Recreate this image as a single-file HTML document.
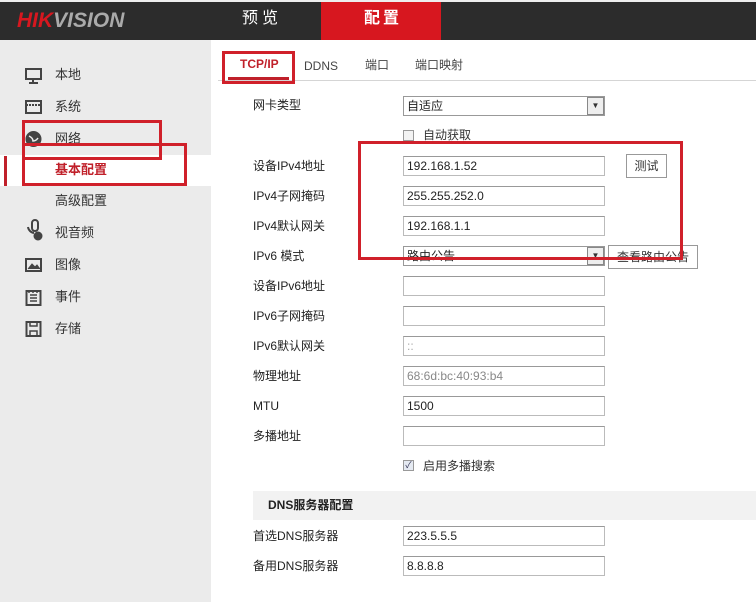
<!DOCTYPE html>
<html><head><meta charset="utf-8"><style>
*{margin:0;padding:0;box-sizing:border-box}
body{width:756px;height:602px;overflow:hidden;background:#fff;font-family:"Liberation Sans","Noto Sans CJK SC",sans-serif;font-size:12px;color:#333;position:relative;line-height:1.3}
.a{position:absolute}
.hdr{left:0;top:0;width:756px;height:40px;background:#2c2c2c;border-top:2px solid #eee}
.logo{left:17px;top:7px;font-size:21px;font-weight:bold;font-style:italic;letter-spacing:0}
.side{left:0;top:40px;width:211px;height:562px;background:#ebebeb}
.mi{left:55px;font-size:13px;color:#333}
.lab{left:253px;font-size:12px;color:#222}
.inp{left:403px;width:202px;height:20px;border:1px solid #bbb;border-top-color:#999;background:#fff;padding:0 3px;line-height:18px;font-size:12px;color:#222}
.rb{border:3px solid #d0202a}
</style></head><body>
<div class="a hdr"></div>
<div class="a logo"><span style="color:#d7171f">HIK</span><span style="color:#aaa">VISION</span></div>
<div class="a" style="left:242px;top:9px;color:#fff;font-size:16px;letter-spacing:4px">预览</div>
<div class="a" style="left:321px;top:2px;width:120px;height:38px;background:#d7171f"></div>
<div class="a" style="left:364px;top:9px;color:#fff;font-size:16px;font-weight:bold;letter-spacing:3px">配置</div>
<div class="a side"></div>
<div class="a" style="left:0;top:155px;width:211px;height:31px;background:#fff"></div>
<div class="a" style="left:4px;top:156px;width:3px;height:30px;background:#c0202a"></div>
<svg class="a" style="left:24px;top:66px" width="20" height="290" viewBox="0 0 20 290" fill="none" stroke="#444" stroke-width="2">
<rect x="2" y="3" width="15" height="10"/><path d="M9 13v3M5 17h9"/>
<rect x="2" y="35" width="15" height="12"/><path d="M2 39h15" stroke-dasharray="2 1"/>
<circle cx="9.5" cy="73" r="7" fill="#444"/><path d="M5 70q4 2 4 5q3 0 5 -3" stroke="#ebebeb" stroke-width="1.5"/>
<path d="M8 162v-5a3 3 0 0 1 6 0v5a3 3 0 0 1 -6 0zM4 161a7 7 0 0 0 6 6"/><circle cx="14" cy="170" r="3.5" fill="#444"/>
<rect x="2" y="193" width="15" height="12"/><path d="M4 203l4-5 3 3 2-2 3 4" fill="#444" stroke-width="1"/>
<rect x="2.5" y="225" width="14" height="14"/><path d="M6 229h7M6 232h7M6 235h7M5 224v3M9 224v3M13 224v3" stroke-width="1.5"/>
<rect x="2.5" y="256" width="14" height="14"/><path d="M6 256v4h7v-4M6 270v-5h7v5" stroke-width="1.5"/>
</svg>
<div class="a mi" style="top:67px">本地</div>
<div class="a mi" style="top:99px">系统</div>
<div class="a mi" style="top:131px">网络</div>
<div class="a mi" style="top:162px;color:#c0202a;font-weight:bold">基本配置</div>
<div class="a mi" style="top:193px">高级配置</div>
<div class="a mi" style="top:225px">视音频</div>
<div class="a mi" style="top:257px">图像</div>
<div class="a mi" style="top:289px">事件</div>
<div class="a mi" style="top:321px">存储</div>
<div class="a" style="left:218px;top:80px;width:538px;height:1px;background:#d5d5d5"></div>
<div class="a" style="left:228px;top:77px;width:61px;height:3px;background:#c0202a"></div>
<div class="a" style="left:240px;top:57px;color:#c0202a;font-weight:bold;font-size:12px">TCP/IP</div>
<div class="a" style="left:304px;top:59px;font-size:12px;color:#444">DDNS</div>
<div class="a" style="left:365px;top:58px;color:#444">端口</div>
<div class="a" style="left:415px;top:58px;color:#444">端口映射</div>
<div class="a lab" style="top:98px">网卡类型</div>
<div class="a inp" style="top:96px;border-color:#999">自适应</div>
<div class="a" style="left:587px;top:97px;width:17px;height:18px;border:1px solid #888;background:#eee;font-size:8px;text-align:center;line-height:16px">▼</div>
<div class="a" style="left:403px;top:130px;width:11px;height:11px;border:1px solid #999;background:#f3f3f3"></div>
<div class="a" style="left:423px;top:128px">自动获取</div>
<div class="a lab" style="top:159px">设备IPv4地址</div><div class="a inp" style="top:156px">192.168.1.52</div>
<div class="a" style="left:626px;top:154px;width:41px;height:24px;border:1px solid #999;background:#fff;text-align:center;line-height:22px">测试</div>
<div class="a lab" style="top:189px">IPv4子网掩码</div><div class="a inp" style="top:186px">255.255.252.0</div>
<div class="a lab" style="top:219px">IPv4默认网关</div><div class="a inp" style="top:216px">192.168.1.1</div>
<div class="a lab" style="top:249px">IPv6 模式</div><div class="a inp" style="top:246px;border-color:#999">路由公告</div>
<div class="a" style="left:587px;top:247px;width:17px;height:18px;border:1px solid #888;background:#eee;font-size:8px;text-align:center;line-height:16px">▼</div>
<div class="a" style="left:608px;top:245px;width:90px;height:24px;border:1px solid #999;background:#fff;text-align:center;line-height:22px">查看路由公告</div>
<div class="a lab" style="top:279px">设备IPv6地址</div><div class="a inp" style="top:276px"></div>
<div class="a lab" style="top:309px">IPv6子网掩码</div><div class="a inp" style="top:306px"></div>
<div class="a lab" style="top:339px">IPv6默认网关</div><div class="a inp" style="top:336px;color:#aaa">::</div>
<div class="a lab" style="top:369px">物理地址</div><div class="a inp" style="top:366px;color:#888">68:6d:bc:40:93:b4</div>
<div class="a lab" style="top:399px">MTU</div><div class="a inp" style="top:396px">1500</div>
<div class="a lab" style="top:429px">多播地址</div><div class="a inp" style="top:426px"></div>
<div class="a" style="left:403px;top:460px;width:11px;height:11px;border:1px solid #999;background:#e5eaf2;font-size:9px;line-height:9px;text-align:center;color:#335">✓</div>
<div class="a" style="left:423px;top:459px">启用多播搜索</div>
<div class="a" style="left:253px;top:491px;width:503px;height:29px;background:#f2f2f2"></div>
<div class="a" style="left:268px;top:498px;font-weight:bold;color:#222">DNS服务器配置</div>
<div class="a lab" style="top:529px">首选DNS服务器</div><div class="a inp" style="top:526px">223.5.5.5</div>
<div class="a lab" style="top:559px">备用DNS服务器</div><div class="a inp" style="top:556px">8.8.8.8</div>
<div class="a rb" style="left:222px;top:51px;width:73px;height:33px"></div>
<div class="a rb" style="left:22px;top:120px;width:140px;height:40px"></div>
<div class="a rb" style="left:22px;top:143px;width:165px;height:43px"></div>
<div class="a rb" style="left:358px;top:141px;width:325px;height:119px"></div>
</body></html>
